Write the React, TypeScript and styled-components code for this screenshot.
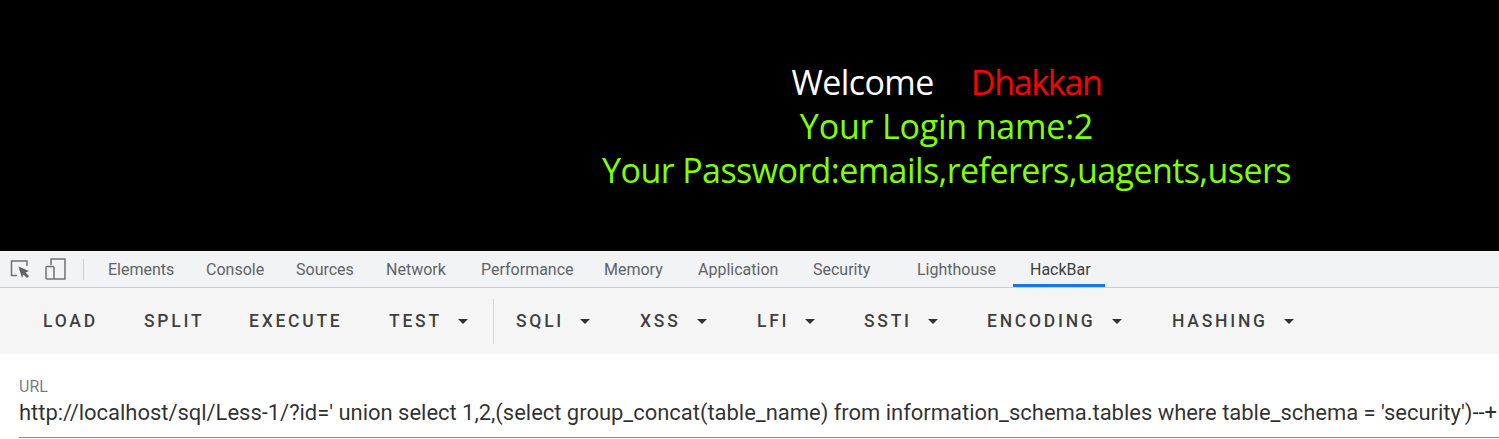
import React from "react";
import styled, { createGlobalStyle } from "styled-components";

const Global = createGlobalStyle`
  html, body { margin: 0; padding: 0; background: #fff; overflow: hidden; }
  #root { width: 1499px; height: 439px; overflow: hidden; }
`;

const Page = styled.div`
  display: flex;
  flex-direction: column;
  width: 1499px;
  height: 439px;
`;

const Viewport = styled.section`
  height: 251px;
  background: #000;
  box-sizing: border-box;
  padding: 60px 0 0 394px;
  display: flex;
  flex-direction: column;
  align-items: center;
  font-family: "Open Sans", "Noto Sans", sans-serif;
  font-size: 34px;
  line-height: 44px;
  letter-spacing: -0.58px;
`;

const Line = styled.div<{ $color: string; $spacing?: number }>`
  color: ${(p) => p.$color};
  white-space: pre;
  ${(p) => p.$spacing !== undefined && `letter-spacing: ${p.$spacing}px;`}
`;

const Name = styled.span`
  color: #ff0000;
  margin-left: 37px;
  letter-spacing: -1.3px;
`;

const TabBar = styled.nav`
  height: 36px;
  background: #f1f3f4;
  border-bottom: 1px solid #cbcdd0;
  display: flex;
  align-items: stretch;
  font-family: Roboto, sans-serif;
  font-size: 16px;
  color: #5f6368;
`;

const IconSlot = styled.div`
  display: flex;
  align-items: center;
  padding-left: 10px;
  gap: 15px;
`;

const IconDivider = styled.div`
  width: 1px;
  height: 21px;
  background: #cbcdd0;
  margin: 0 8px 0 16px;
  align-self: center;
`;

const Tab = styled.div<{ $active?: boolean; $w: number }>`
  width: ${(p) => p.$w}px;
  box-sizing: border-box;
  padding-left: ${(p) => (p.$active ? 17 : 16)}px;
  display: flex;
  align-items: center;
  white-space: nowrap;
  color: ${(p) => (p.$active ? "#3c4043" : "#5f6368")};
  ${(p) => p.$active && "box-shadow: inset 0 -3px 0 #1a73e8;"}
`;

const Toolbar = styled.div`
  height: 66px;
  background: #f5f5f5;
  display: flex;
  align-items: center;
  padding-left: 23px;
  font-family: Roboto, sans-serif;
  font-weight: 500;
  font-size: 17.5px;
  letter-spacing: 2.75px;
  color: rgba(0, 0, 0, 0.76);
`;

const Btn = styled.div<{ $w: number }>`
  width: ${(p) => p.$w}px;
  box-sizing: border-box;
  padding-left: 20px;
  display: flex;
  align-items: center;
  white-space: nowrap;
`;

const Caret = styled.span`
  margin-left: 16px;
  margin-top: 1px;
  width: 0;
  height: 0;
  border-left: 5px solid transparent;
  border-right: 5px solid transparent;
  border-top: 5px solid rgba(0, 0, 0, 0.8);
`;

const VDivider = styled.div`
  width: 1px;
  height: 45px;
  background: #d9d9d9;
  margin-right: 2px;
`;

const UrlSection = styled.div`
  flex: 1;
  background: #fff;
  padding: 24px 0 0 19px;
  font-family: Roboto, sans-serif;
  overflow: hidden;
`;

const UrlLabel = styled.div`
  font-size: 16px;
  line-height: 18px;
  color: rgba(0, 0, 0, 0.54);
`;

const UrlValue = styled.div`
  margin-top: 4px;
  font-size: 22px;
  line-height: 26px;
  letter-spacing: -0.03px;
  color: rgba(0, 0, 0, 0.82);
  white-space: nowrap;
  height: 26px;
  padding-bottom: 11px;
  border-bottom: 1px solid #8a8a8a;
`;

const tabs: [string, number][] = [
  ["Elements", 98],
  ["Console", 90],
  ["Sources", 90],
  ["Network", 95],
  ["Performance", 123],
  ["Memory", 94],
  ["Application", 115],
  ["Security", 104],
  ["Lighthouse", 112],
];

const menus: [string, number][] = [
  ["SQLI", 124],
  ["XSS", 117],
  ["LFI", 107],
  ["SSTI", 123],
  ["ENCODING", 185],
  ["HASHING", 172],
];

export default function App() {
  return (
    <Page>
      <Global />
      <Viewport>
        <Line $color="#ffffff">
          Welcome<Name>Dhakkan</Name>
        </Line>
        <Line $color="#7fff00" $spacing={-0.2}>
          Your Login name:2
        </Line>
        <Line $color="#7fff00">Your Password:emails,referers,uagents,users</Line>
      </Viewport>
      <TabBar>
        <IconSlot>
          <svg width="20" height="20" viewBox="0 0 20 20" fill="none">
            <path d="M7 16.5H1.5V2H17V7" stroke="#6e7175" strokeWidth="1.5" />
            <path d="M8.5 7.5L19 12L15.5 13.5L19 17L17 19L13.5 15.5L12 19Z" fill="#5f6368" />
          </svg>
          <svg width="22" height="24" viewBox="0 0 22 24" fill="none">
            <path d="M6 8V2H20V22H9" stroke="#6e7175" strokeWidth="1.5" />
            <rect x="1" y="9.5" width="8" height="12.5" rx="1" stroke="#6e7175" strokeWidth="1.5" />
          </svg>
        </IconSlot>
        <IconDivider />
        {tabs.map(([t, w]) => (
          <Tab key={t} $w={w}>
            {t}
          </Tab>
        ))}
        <Tab $w={92} $active>
          HackBar
        </Tab>
      </TabBar>
      <Toolbar>
        <Btn $w={101}>LOAD</Btn>
        <Btn $w={105}>SPLIT</Btn>
        <Btn $w={140}>EXECUTE</Btn>
        <Btn $w={124}>
          TEST
          <Caret />
        </Btn>
        <VDivider />
        {menus.map(([t, w]) => (
          <Btn key={t} $w={w}>
            {t}
            <Caret />
          </Btn>
        ))}
      </Toolbar>
      <UrlSection>
        <UrlLabel>URL</UrlLabel>
        <UrlValue>
          http://localhost/sql/Less-1/?id=' union select 1,2,(select group_concat(table_name) from information_schema.tables where table_schema = 'security')--+
        </UrlValue>
      </UrlSection>
    </Page>
  );
}
